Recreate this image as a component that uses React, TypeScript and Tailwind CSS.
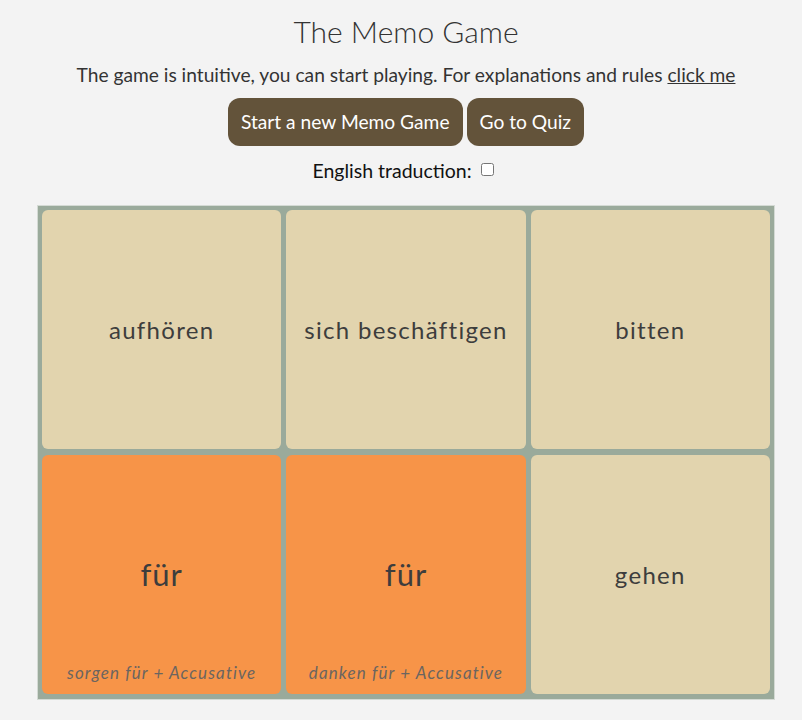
import React from "react";

type Card = { word: string; flipped?: boolean; hint?: string };

const cards: Card[] = [
  { word: "aufhören" },
  { word: "sich beschäftigen" },
  { word: "bitten" },
  { word: "für", flipped: true, hint: "sorgen für + Accusative" },
  { word: "für", flipped: true, hint: "danken für + Accusative" },
  { word: "gehen" },
];

export default function App() {
  return (
    <div
      className="min-h-[720px] w-full bg-[#f3f3f3] text-[#333]"
      style={{ fontFamily: "Lato, 'Open Sans', sans-serif" }}
    >
      <div className="flex flex-col items-center pl-[10px]">
        <h1 className="mt-[12px] text-[30px] font-light leading-[38px] text-[#333]">
          The Memo Game
        </h1>
        <p className="mt-[11px] text-[19.2px] leading-[28px] text-[#333]">
          The game is intuitive, you can start playing. For explanations and rules{" "}
          <a className="underline text-[#333]" href="#">
            click me
          </a>
        </p>
        <div className="mt-[9px] flex gap-[4px]">
          <button className="h-[48px] rounded-[12px] bg-[#63533a] px-[13px] text-[19.2px] text-white">
            Start a new Memo Game
          </button>
          <button className="h-[48px] rounded-[12px] bg-[#63533a] px-[13px] text-[19.2px] text-white">
            Go to Quiz
          </button>
        </div>
        <div className="mt-[12px] mr-[6px] flex items-center gap-[9px] text-[19.5px] leading-[26px] text-[#111]">
          <span>English traduction:</span>
          <input type="checkbox" className="h-[13px] w-[13px] -mt-[3px]" />
        </div>
        <div className="mt-[21px] grid w-[738px] grid-cols-3 gap-x-[5px] gap-y-[6px] border border-[#d4dad4] bg-[#9aaa9b] px-[4px] pt-[4px] pb-[5px]">
          {cards.map((c, i) => (
            <div
              key={i}
              className={`relative flex h-[239px] items-center justify-center rounded-[6px] ${
                c.flipped ? "bg-[#f79448]" : "bg-[#e2d4ae]"
              }`}
            >
              <span
                className={`${
                  c.flipped ? "text-[31px] tracking-[1px]" : "text-[24px] tracking-[1.3px]"
                } text-[#3d3d3d]`}
              >
                {c.word}
              </span>
              {c.hint && (
                <span className="absolute bottom-[9px] left-0 right-0 text-center text-[17px] italic tracking-[1.1px] text-[#6b6560]">
                  {c.hint}
                </span>
              )}
            </div>
          ))}
        </div>
      </div>
    </div>
  );
}
